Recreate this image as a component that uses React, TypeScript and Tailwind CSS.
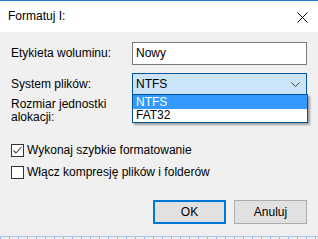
import React from 'react';

export default function App() {
  return (
    <div className="relative w-[318px] h-[239px] overflow-hidden bg-[#f0f0f0] text-[12px] leading-[15px] text-black" style={{ fontFamily: '"Liberation Sans", Arial, sans-serif' }}>
      <div className="h-px bg-[#2b7ad0]" />
      <div className="h-[31px] bg-white flex items-center justify-between pl-2 pr-[10px]">
        <span className="text-[12px]">Formatuj I:</span>
        <svg width="11" height="11" viewBox="0 0 11 11" className="mt-[1px]">
          <path d="M0.5 0.5 L10.5 10.5 M10.5 0.5 L0.5 10.5" stroke="#000" strokeWidth="1" fill="none" />
        </svg>
      </div>

      <div className="flex flex-col pl-[11px] pt-[10px]">
        <div className="flex items-center h-[23px]">
          <span className="w-[121px]">Etykieta woluminu:</span>
          <div className="w-[175px] h-[23px] border border-[#7a7a7a] bg-white flex items-center pl-[3px]">Nowy</div>
        </div>
        <div className="flex items-center h-[22px] mt-[8px]">
          <span className="w-[121px]">System plików:</span>
          <div className="w-[175px] h-[22px] border border-[#005499] bg-[#cce4f7] flex items-center justify-between pl-[3px] pr-[6px]">
            <span>NTFS</span>
            <svg width="9" height="5" viewBox="0 0 9 5">
              <path d="M0.5 0.5 L4.5 4.5 L8.5 0.5" stroke="#444" strokeWidth="1" fill="none" />
            </svg>
          </div>
        </div>
        <div className="mt-[3px] leading-[13px]">
          Rozmiar jednostki
          <br />
          alokacji:
        </div>

        <div className="flex items-center mt-[20px] h-[13px]">
          <div className="w-[13px] h-[13px] border border-[#333] bg-white flex items-center justify-center">
            <svg width="11" height="11" viewBox="0 0 11 11">
              <path d="M1.5 5.5 L4 8 L9.5 2" stroke="#444" strokeWidth="1.1" fill="none" />
            </svg>
          </div>
          <span className="ml-[3px]">Wykonaj szybkie formatowanie</span>
        </div>
        <div className="flex items-center mt-[9px] h-[13px]">
          <div className="w-[13px] h-[13px] border border-[#333] bg-white" />
          <span className="ml-[3px]">Włącz kompresję plików i folderów</span>
        </div>

        <div className="flex justify-end gap-[8px] mt-[21px] pr-[11px]">
          <button className="w-[73px] h-[24px] border-2 border-[#0078d7] bg-[#e1e1e1] text-[12px]">OK</button>
          <button className="w-[73px] h-[24px] border border-[#adadad] bg-[#e1e1e1] text-[12px]">Anuluj</button>
        </div>
      </div>

      <div className="absolute left-0 right-0 bottom-0 h-[3px] border-t border-[#a9c6e3] bg-[repeating-linear-gradient(90deg,#8fb3d8_0px,#8fb3d8_1px,transparent_1px,transparent_9px)]" />

      <div className="absolute left-[132px] top-[94px] w-[176px] bg-white border border-[#005499] shadow-[2px_2px_2px_rgba(0,0,0,0.35)]">
        <div className="h-[14px] bg-[#3399ff] text-white pl-[3px] leading-[14px]">NTFS</div>
        <div className="h-[13px] pl-[3px] leading-[13px]">FAT32</div>
      </div>
    </div>
  );
}
